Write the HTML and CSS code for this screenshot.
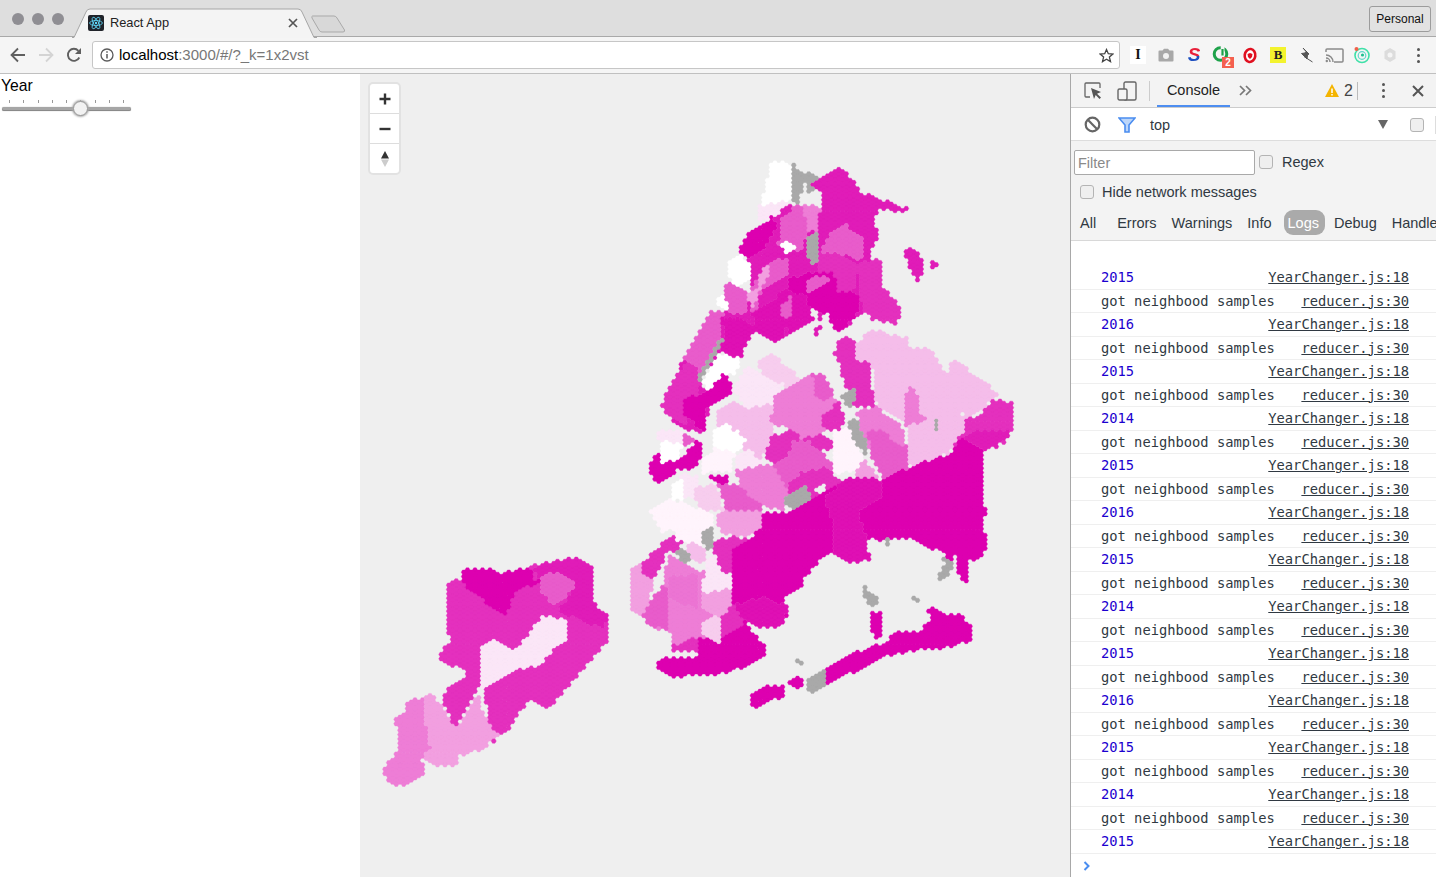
FILE: index.html

```html
<!DOCTYPE html>
<html lang="en">
<head>
    <meta charset="UTF-8">
    <title>React App</title>
    <link rel="stylesheet" href="styles.css">
</head>
<body>
    <div class="tabstrip">
        <div class="lights"><span class="light"></span><span class="light"></span><span class="light"></span></div>
        <div class="tab">
            <svg class="tab-shape" width="245" height="30" viewBox="0 0 245 30"><path d="M0 29.5 H2 L14 4 Q15 1 18 1 H226 Q229 1 230 4 L242 29.5 H245" fill="#f4f4f4" stroke="#a6a6a6"/></svg>
            <svg class="favicon" width="16" height="16" viewBox="0 0 16 16"><rect width="16" height="16" rx="2" fill="#20232a"/><g fill="none" stroke="#61dafb" stroke-width=".8"><ellipse cx="8" cy="8" rx="6.4" ry="2.5"/><ellipse cx="8" cy="8" rx="6.4" ry="2.5" transform="rotate(60 8 8)"/><ellipse cx="8" cy="8" rx="6.4" ry="2.5" transform="rotate(120 8 8)"/></g><circle cx="8" cy="8" r="1.2" fill="#61dafb"/></svg>
            <span class="tab-title">React App</span>
            <svg class="tab-close" width="10" height="10" viewBox="0 0 10 10"><path d="M1 1 L9 9 M9 1 L1 9" stroke="#555" stroke-width="1.7"/></svg>
        </div>
        <svg class="new-tab" width="35" height="18" viewBox="0 0 35 18"><path d="M1.5 1 H23 Q25 1 26 3 L33.500 15 Q34 17 32 17 H11 Q9 17 8 15 L1 3 Q.5 1 1.500 1Z" fill="#d8d8d8" stroke="#a9a9a9"/></svg>
        <div class="profile">Personal</div>
    </div>

    <div class="toolbar">
        <div class="nav-btn"><svg width="16" height="16" viewBox="0 0 16 16"><path d="M15 8 H2 M8 1.500 L1.500 8 L8 14.500" fill="none" stroke="#5f5f5f" stroke-width="1.800"/></svg></div>
        <div class="nav-btn"><svg width="16" height="16" viewBox="0 0 16 16"><path d="M1 8 H14 M8 1.500 L14.500 8 L8 14.500" fill="none" stroke="#d4d4d4" stroke-width="1.800"/></svg></div>
        <div class="nav-btn"><svg width="16" height="16" viewBox="0 0 16 16"><path d="M13.300 10.500 A6 6 0 1 1 12.400 3.800" fill="none" stroke="#5f5f5f" stroke-width="1.900"/><path d="M15 1 V7 H9Z" fill="#5f5f5f"/></svg></div>
        <div class="urlbar">
            <svg class="info-icon" width="14" height="14" viewBox="0 0 14 14"><circle cx="7" cy="7" r="6" fill="none" stroke="#5a5a5a" stroke-width="1.300"/><path d="M7 6 V10.500 M7 3.300 V4.800" stroke="#5a5a5a" stroke-width="1.500"/></svg>
            <span class="url"><span class="url-host">localhost</span>:3000/#/?_k=1x2vst</span>
            <svg class="star-icon" width="15" height="15" viewBox="0 0 15 15"><path d="M7.500 1.500 L9.300 5.700 L13.900 6.100 L10.400 9.100 L11.500 13.600 L7.500 11.200 L3.500 13.600 L4.600 9.100 L1.100 6.100 L5.700 5.700Z" fill="none" stroke="#444" stroke-width="1.300"/></svg>
        </div>
        <div class="extensions">
            <div class="ext"><span class="ext-i">I</span></div>
            <div class="ext"><svg width="16" height="14" viewBox="0 0 16 14"><path d="M1.500 2.500 H4.500 L6 .8 H10 L11.500 2.500 H14.500 Q15.500 2.500 15.500 3.500 V12.500 Q15.500 13.500 14.500 13.500 H1.500 Q.5 13.500 .5 12.500 V3.500 Q.5 2.500 1.500 2.500Z" fill="#a8a8a8"/><circle cx="8" cy="8" r="3" fill="#f2f2f2"/></svg></div>
            <div class="ext"><span class="ext-s">S</span></div>
            <div class="ext"><svg width="20" height="20" viewBox="0 0 20 20"><circle cx="8.500" cy="9" r="6.300" fill="none" stroke="#1ea24a" stroke-width="3"/><path d="M8.700 1 H12.500 V10 H8.700Z" fill="#f5f5f5"/><path d="M10.500 4 V10.500" stroke="#1ea24a" stroke-width="2.200"/></svg><span class="ext-badge">2</span></div>
            <div class="ext"><svg width="16" height="17" viewBox="0 0 16 17"><ellipse cx="8" cy="8.500" rx="5.300" ry="6.500" fill="#fff" stroke="#e01020" stroke-width="2.600" transform="rotate(8 8 8.500)"/><path d="M5.500 7 L8 6 L10.500 7 L10 10 L8 12 L6 10Z" fill="#e01020"/></svg></div>
            <div class="ext"><span class="ext-b">B</span></div>
            <div class="ext"><svg width="16" height="16" viewBox="0 0 16 16"><path d="M5 1 L11 7 L9.500 8 L9 12 L3.500 6.500 L7 6 L8 4.500Z M6 9.500 L14.500 15" fill="#555" stroke="#555"/></svg></div>
            <div class="ext"><svg width="19" height="15" viewBox="0 0 19 15"><path d="M1 4 V2 Q1 1 2 1 H17 Q18 1 18 2 V13 Q18 14 17 14 H9" fill="none" stroke="#8a8a8a" stroke-width="1.500"/><path d="M1 7 A7 7 0 0 1 8 14 M1 10 A4 4 0 0 1 5 14" fill="none" stroke="#8a8a8a" stroke-width="1.500"/><circle cx="1.800" cy="13" r="1.200" fill="#8a8a8a"/></svg></div>
            <div class="ext"><svg width="18" height="18" viewBox="0 0 18 18"><circle cx="9" cy="9.500" r="7" fill="none" stroke="#3fe0a8" stroke-width="1.600"/><circle cx="9" cy="9.500" r="3.800" fill="none" stroke="#5fd8c8" stroke-width="1.200"/><circle cx="9.500" cy="9" r="1.600" fill="#20c090"/><circle cx="3.500" cy="3" r="2" fill="#f0604a"/></svg></div>
            <div class="ext"><svg width="16" height="16" viewBox="0 0 16 16"><path d="M8 1 L13.500 4.300 V11.700 L8 15 L2.500 11.700 V4.300Z" fill="#dcdcdc"/><circle cx="8" cy="8" r="2.500" fill="#f5f5f5"/></svg></div>
            <div class="ext"><span class="dots"><i></i><i></i><i></i></span></div>
        </div>
    </div>

    <div class="main">
        <div class="sidebar">
            <div class="year-label">Year</div>
            <div class="slider">
                <div class="ticks"><i></i><i></i><i></i><i></i><i></i><i></i><i></i><i></i><i></i></div>
                <div class="rail"></div>
                <div class="thumb"></div>
            </div>
        </div>

        <div class="map">
            <svg id="hexmap" width="710" height="803" viewBox="360 74 710 803"></svg>
            <div class="map-controls">
                <div class="map-btn"><svg width="12" height="12" viewBox="0 0 12 12"><path d="M6 .5 V11.500 M.5 6 H11.500" stroke="#333" stroke-width="2.400"/></svg></div>
                <div class="map-btn"><svg width="12" height="12" viewBox="0 0 12 12"><path d="M.5 6 H11.500" stroke="#333" stroke-width="2.400"/></svg></div>
                <div class="map-btn"><svg width="10" height="18" viewBox="0 0 10 18"><path d="M5 1 L9 8.500 H1Z" fill="#333"/><path d="M5 17 L9 9.500 H1Z" fill="#ccc"/></svg></div>
            </div>
        </div>

        <div class="devtools">
            <div class="dt-tabs">
                <svg class="dt-inspect" width="18" height="18" viewBox="0 0 18 18"><path d="M6 15 H2 Q1 15 1 14 V2 Q1 1 2 1 H15 Q16 1 16 2 V6" fill="none" stroke="#666" stroke-width="1.300"/><path d="M7 6 L17 10 L13 11.700 L17 15.500 L15.500 17 L11.700 13 L10 17Z" fill="#555"/></svg>
                <svg class="dt-device" width="20" height="20" viewBox="0 0 20 20"><rect x="7" y="1" width="12" height="18" rx="1.500" fill="none" stroke="#666" stroke-width="1.400"/><rect x="1" y="8" width="9" height="11" rx="1.500" fill="#f3f3f3" stroke="#666" stroke-width="1.400"/></svg>
                <span class="dt-sep"></span>
                <span class="dt-tab">Console</span>
                <svg class="dt-more" width="13" height="11" viewBox="0 0 13 11"><path d="M1 1 L5.500 5.500 L1 10 M7 1 L11.500 5.500 L7 10" fill="none" stroke="#777" stroke-width="1.700"/></svg>
                <span class="dt-warn"><svg width="14" height="13" viewBox="0 0 14 13"><path d="M7 0 L14 13 H0Z" fill="#f4b400"/><path d="M7 4.500 V9 M7 10 V11.500" stroke="#fff" stroke-width="1.500"/></svg>2</span>
                <span class="dt-sep-small"></span>
                <span class="dots dt-dots"><i></i><i></i><i></i></span>
                <svg class="dt-close" width="12" height="12" viewBox="0 0 12 12"><path d="M1 1 L11 11 M11 1 L1 11" stroke="#555" stroke-width="2"/></svg>
            </div>

            <div class="dt-context">
                <svg class="dt-clear" width="17" height="17" viewBox="0 0 17 17"><circle cx="8.500" cy="8.500" r="6.800" fill="none" stroke="#666" stroke-width="2.200"/><path d="M3.800 3.800 L13.200 13.200" stroke="#666" stroke-width="2.200"/></svg>
                <svg class="dt-funnel" width="18" height="16" viewBox="0 0 18 16"><path d="M1 1 H17 L11 8 V15 H7 V8Z" fill="#bcd6fa" stroke="#4a8df0" stroke-width="1.600"/></svg>
                <span class="dt-top">top</span>
                <svg class="dt-arrow" width="10" height="9" viewBox="0 0 10 9"><path d="M0 0 H10 L5 9Z" fill="#666"/></svg>
                <span class="check"></span>
                <span class="dt-sep-thin"></span>
            </div>

            <div class="dt-filters">
                <div class="filter-row">
                    <div class="filter-input">Filter</div>
                    <span class="check"></span>
                    <span class="filter-label">Regex</span>
                </div>
                <div class="hide-row">
                    <span class="check"></span>
                    <span>Hide network messages</span>
                </div>
                <div class="levels">
                    <span class="level-all">All</span>
                    <span>Errors</span>
                    <span>Warnings</span>
                    <span>Info</span>
                    <span class="level-on">Logs</span>
                    <span>Debug</span>
                    <span>Handled</span>
                </div>
            </div>

            <div class="messages">
                <div class="msg"><span class="num">2015</span><a class="src">YearChanger.js:18</a></div>
                <div class="msg"><span>got neighbood samples</span><a class="src">reducer.js:30</a></div>
                <div class="msg"><span class="num">2016</span><a class="src">YearChanger.js:18</a></div>
                <div class="msg"><span>got neighbood samples</span><a class="src">reducer.js:30</a></div>
                <div class="msg"><span class="num">2015</span><a class="src">YearChanger.js:18</a></div>
                <div class="msg"><span>got neighbood samples</span><a class="src">reducer.js:30</a></div>
                <div class="msg"><span class="num">2014</span><a class="src">YearChanger.js:18</a></div>
                <div class="msg"><span>got neighbood samples</span><a class="src">reducer.js:30</a></div>
                <div class="msg"><span class="num">2015</span><a class="src">YearChanger.js:18</a></div>
                <div class="msg"><span>got neighbood samples</span><a class="src">reducer.js:30</a></div>
                <div class="msg"><span class="num">2016</span><a class="src">YearChanger.js:18</a></div>
                <div class="msg"><span>got neighbood samples</span><a class="src">reducer.js:30</a></div>
                <div class="msg"><span class="num">2015</span><a class="src">YearChanger.js:18</a></div>
                <div class="msg"><span>got neighbood samples</span><a class="src">reducer.js:30</a></div>
                <div class="msg"><span class="num">2014</span><a class="src">YearChanger.js:18</a></div>
                <div class="msg"><span>got neighbood samples</span><a class="src">reducer.js:30</a></div>
                <div class="msg"><span class="num">2015</span><a class="src">YearChanger.js:18</a></div>
                <div class="msg"><span>got neighbood samples</span><a class="src">reducer.js:30</a></div>
                <div class="msg"><span class="num">2016</span><a class="src">YearChanger.js:18</a></div>
                <div class="msg"><span>got neighbood samples</span><a class="src">reducer.js:30</a></div>
                <div class="msg"><span class="num">2015</span><a class="src">YearChanger.js:18</a></div>
                <div class="msg"><span>got neighbood samples</span><a class="src">reducer.js:30</a></div>
                <div class="msg"><span class="num">2014</span><a class="src">YearChanger.js:18</a></div>
                <div class="msg"><span>got neighbood samples</span><a class="src">reducer.js:30</a></div>
                <div class="msg"><span class="num">2015</span><a class="src">YearChanger.js:18</a></div>
                <svg class="prompt" width="8" height="10" viewBox="0 0 8 10"><path d="M1.500 1 L5.500 5 L1.500 9" fill="none" stroke="#4a8df0" stroke-width="2"/></svg>
            </div>
        </div>
    </div>

    <script src="map.js"></script>
</body>
</html>
```

FILE: styles.css

```css
html, body {
    margin: 0;
    height: 877px;
    overflow: hidden;
    background-color: #fff;
    font-family: "Liberation Sans", Arial, sans-serif;
}
.tabstrip {
    position: relative;
    display: flex;
    height: 37px;
    background-color: #dedede;
    border-bottom: 1px solid #a9a9a9;
    box-sizing: border-box;
}
.lights {
    display: flex;
    gap: 8px;
    padding: 13px 0 0 12px;
    width: 60px;
}
.light {
    width: 12px;
    height: 12px;
    border-radius: 50%;
    background-color: #8f8e93;
}
.tab {
    position: relative;
    display: flex;
    align-items: center;
    width: 245px;
    height: 29px;
    margin-top: 8px;
    font-size: 12.800px;
}
.tab-shape {
    position: absolute;
    left: 0;
    top: 0;
}
.favicon {
    position: relative;
    margin-left: 16px;
}
.tab-title {
    position: relative;
    margin-left: 6px;
    color: #222;
}
.tab-close {
    position: absolute;
    left: 216px;
    top: 10px;
}
.new-tab {
    margin: 15px 0 0 -6px;
}
.profile {
    position: absolute;
    right: 5px;
    top: 6px;
    width: 60px;
    height: 24px;
    line-height: 24px;
    text-align: center;
    font-size: 12px;
    color: #111;
    border: 1px solid #9c9c9c;
    border-radius: 3px;
    background-color: #e2e2e2;
}
.toolbar {
    display: flex;
    align-items: center;
    height: 37px;
    padding: 0 4px;
    box-sizing: border-box;
    background-color: #f5f5f5;
    border-bottom: 1px solid #c0c0c0;
}
.nav-btn, .ext {
    position: relative;
    display: flex;
    align-items: center;
    justify-content: center;
    width: 28px;
    height: 28px;
}
.urlbar {
    display: flex;
    align-items: center;
    flex: 1;
    height: 28px;
    margin: 0 4px 0 4px;
    box-sizing: border-box;
    background-color: #fff;
    border: 1px solid #c6c6c6;
    border-radius: 3px;
}
.info-icon {
    margin-left: 7px;
}
.url {
    margin: 0 0 2px 5px;
    flex: 1;
    font-size: 15px;
    color: #777;
}
.url-host {
    color: #000;
}
.star-icon {
    margin-right: 5px;
}
.extensions {
    display: flex;
}
.ext-i {
    width: 16px;
    text-align: center;
    font: bold 14px/18px "Liberation Serif", serif;
    color: #111;
    background-color: #fff;
}
.ext-s {
    font: italic bold 19px/20px "Liberation Sans", sans-serif;
    color: transparent;
    background: linear-gradient(#e8203a 55%, #1f50c0 55%);
    -webkit-background-clip: text;
    background-clip: text;
}
.ext-b {
    width: 16px;
    height: 16px;
    text-align: center;
    font: bold 13px/16px "Liberation Serif", serif;
    background-color: #f3f32e;
    color: #222;
}
.ext-badge {
    position: absolute;
    right: 2px;
    bottom: 1px;
    width: 12px;
    height: 11px;
    line-height: 11px;
    text-align: center;
    font-size: 10px;
    font-weight: bold;
    color: #fff;
    background-color: #f4604f;
}
.dots {
    display: flex;
    flex-direction: column;
    gap: 3px;
}
.dots i {
    width: 3px;
    height: 3px;
    border-radius: 50%;
    background-color: #555;
}

.main {
    display: flex;
    height: 803px;
}
.sidebar {
    width: 360px;
    background-color: #fff;
}
.year-label {
    margin: 2px 0 0 1px;
    font-size: 15.700px;
    line-height: 19px;
    color: #000;
}
.slider {
    position: relative;
    width: 129px;
    margin: 5px 0 0 2px;
}
.ticks {
    display: flex;
    justify-content: space-between;
    height: 4px;
    padding: 0 7px;
}
.ticks i {
    width: 1px;
    height: 3px;
    background-color: #999;
}
.rail {
    height: 4px;
    margin-top: 3px;
    border-radius: 2px;
    background-color: #a6a6a6;
    box-shadow: inset 0 -1px 0 #8a8a8a, 0 0 1px #999;
}
.thumb {
    position: absolute;
    left: 71px;
    top: 1px;
    width: 13px;
    height: 13px;
    border-radius: 50%;
    background-color: #f2f2f2;
    border: 1px solid #999;
    box-shadow: 0 0 2px 1px #aaa;
}
.map {
    position: relative;
    width: 710px;
    background-color: #efefef;
}
#hexmap {
    display: block;
}
.map-controls {
    position: absolute;
    left: 8px;
    top: 8px;
    width: 29px;
    background-color: #fff;
    border: 2px solid #e2e2e2;
    border-radius: 5px;
}
.map-btn {
    display: flex;
    align-items: center;
    justify-content: center;
    height: 29px;
    border-bottom: 1px solid #ddd;
}
.map-btn:last-child {
    border-bottom: none;
}

.devtools {
    width: 366px;
    box-sizing: border-box;
    border-left: 1px solid #a8a8a8;
    font-size: 14.500px;
    color: #303942;
    overflow: hidden;
}
.dt-tabs {
    position: relative;
    display: flex;
    align-items: center;
    height: 34px;
    box-sizing: border-box;
    background-color: #f3f3f3;
    border-bottom: 1px solid #ccc;
}
.dt-inspect {
    margin-left: 13px;
}
.dt-device {
    margin-left: 15px;
}
.dt-sep {
    width: 1px;
    height: 20px;
    margin-left: 12px;
    background-color: #ccc;
}
.dt-tab {
    align-self: stretch;
    line-height: 33px;
    margin-left: 7px;
    width: 73px;
    box-sizing: border-box;
    text-align: center;
    font-size: 14.500px;
    color: #222;
    border-bottom: 2px solid #4d8df0;
}
.dt-more {
    margin-left: 9px;
}
.dt-warn {
    display: flex;
    align-items: center;
    gap: 5px;
    margin-left: 73px;
    font-size: 16px;
    color: #444;
}
.dt-sep-small {
    width: 1px;
    height: 18px;
    margin-left: 4px;
    background-color: #bbb;
}
.dt-dots {
    margin-left: 24px;
}
.dt-close {
    margin-left: 27px;
}
.dt-context {
    display: flex;
    align-items: center;
    height: 33px;
    padding-top: 1px;
    background-color: #fff;
    border-bottom: 1px solid #ddd;
    box-sizing: border-box;
}
.dt-clear {
    margin-left: 13px;
}
.dt-funnel {
    margin-left: 17px;
}
.dt-top {
    margin-left: 14px;
    flex: 1;
}
.dt-arrow {
    margin-right: 22px;
}
.dt-context .check {
    margin-right: 11px;
}
.dt-sep-thin {
    width: 1px;
    height: 18px;
    background-color: #ddd;
}
.check {
    display: block;
    width: 12px;
    height: 12px;
    background-color: #efefef;
    border: 1px solid #b4b4b4;
    border-radius: 3px;
}
.dt-filters {
    height: 100px;
    box-sizing: border-box;
    padding-top: 8px;
    background-color: #f3f3f3;
    border-bottom: 1px solid #d8d8d8;
}
.filter-row {
    display: flex;
    align-items: center;
    height: 26px;
    padding-left: 3px;
}
.filter-input {
    height: 23px;
    line-height: 24px;
    margin-right: 4px;
    padding-left: 3px;
    width: 176px;
    background-color: #fff;
    border: 1px solid #a9a9a9;
    border-radius: 2px;
    color: #8a8a8a;
}
.filter-label {
    margin-left: 9px;
}
.hide-row {
    display: flex;
    align-items: center;
    gap: 8px;
    height: 24px;
    margin-top: 5px;
    padding-left: 9px;
}
.levels {
    display: flex;
    align-items: center;
    gap: 15px;
    height: 25px;
    margin-top: 6px;
    white-space: nowrap;
}
.level-all {
    margin-left: 9px;
    margin-right: 6px;
}
.level-on {
    height: 25px;
    line-height: 26px;
    margin: 0 -6px 0 -3px;
    padding: 0 6px 0 4px;
    border-radius: 9px;
    background-color: #aaa;
    color: #fff;
}
.messages {
    padding-top: 25px;
    font-family: "DejaVu Sans Mono", monospace;
    font-size: 13.750px;
}
.msg {
    display: flex;
    justify-content: space-between;
    align-items: center;
    height: 23.500px;
    box-sizing: border-box;
    padding: 0 27px 0 30px;
    border-bottom: 1px solid #efefef;
    color: #303942;
}
.num {
    color: #1c00cf;
}
.src {
    text-decoration: underline;
    color: #303942;
}
.prompt {
    display: block;
    margin: 7px 0 0 12px;
}
```

FILE: map.js

```js
// draws the neighbourhood hex map: each hex takes the colour of the last region holding its centre
var HEX_R = 2.5, COL_W = 3.75, HEX_H = 4.33;

var D = "#dd00b0", D2 = "#df10b4", M1 = "#e01cb8", M2 = "#e430be", M3 = "#e85ccb", M3B = "#ec74d3",
    M4 = "#ee7dd6", L1 = "#f29fe0", L2 = "#f5bdea", L3 = "#f7cdee", VL = "#fbe6f7", W = "#fff4fc",
    WH = "#ffffff", G = "#a9a9a9", BG = null;

// points are read off crops at 3x, so each group has its own origin
var SI = [370, 550], NORTH = [640, 150], SOUTH = [620, 430], BAY = [630, 530];

var regions = [
    // staten island
    [M2, SI, "275,60 360,55 400,70 520,40 625,20 665,50 665,150 718,205 710,280 600,400 570,440 525,480 480,450 430,510 425,535 370,575 340,420 330,410 285,480 255,535 215,440 245,400 285,385 280,355 225,345 205,315 245,270 230,245 235,100 275,85"],
    [D, SI, "275,60 360,55 400,70 440,60 490,60 490,90 505,90 510,100 440,120 410,190 390,195 340,150 275,100"],
    [M1, SI, "490,60 520,40 625,20 665,50 665,150 718,205 700,235 640,220 565,180 615,115 570,70 510,85"],
    [M3, SI, "510,85 555,65 610,95 610,120 550,165 515,130"],
    [VL, SI, "330,295 368,268 425,305 470,265 515,200 590,205 590,265 540,310 510,345 470,350 400,380 340,420 330,410"],
    [L1, SI, "165,445 190,430 240,510 255,535 290,490 320,430 330,440 340,490 385,555 340,595 280,615 260,605 260,650 200,650 160,625 180,590 170,560"],
    [M4, SI, "105,460 130,445 165,445 170,560 185,590 155,625 165,675 110,705 60,705 37,655 80,610 80,530 72,505 105,490"],

    // bronx and upper manhattan
    [WH, NORTH, "390,36 455,40 455,150 360,170 380,100"],
    [VL, NORTH, "355,170 440,150 445,175 415,205 360,215"],
    [G, NORTH, "455,40 500,75 475,160 450,155"],
    [G, NORTH, "505,70 545,85 510,135 500,120"],
    [M1, NORTH, "300,300 320,260 395,200 415,200 430,170 490,165 545,170 545,130 515,105 600,55 650,95 655,125 730,150 800,175 795,190 720,175 700,205 720,265 690,295 695,330 725,325 730,410 780,470 780,510 765,520 700,510 675,480 610,540 585,540 565,495 520,470 510,490 525,515 470,540 400,575 345,540 340,430 330,340"],
    [M3, NORTH, "420,210 470,165 500,175 500,260 480,300 415,290"],
    [M4, NORTH, "490,165 545,170 530,240 500,250"],
    [D, NORTH, "310,265 395,200 415,230 380,285 330,330 295,305"],
    [M3, NORTH, "580,240 610,220 670,270 670,330 600,310 535,310"],
    [M2, NORTH, "650,340 730,325 730,410 780,470 780,510 765,520 700,510 670,480 660,440"],
    [M2, NORTH, "530,310 600,310 650,340 645,420 590,440 520,400 530,360"],
    [D, NORTH, "440,390 500,370 570,365 595,390 590,425 660,430 660,480 610,540 585,540 565,495 520,470 450,430"],
    [M3, NORTH, "490,410 530,375 570,385 560,405 510,425"],
    [M3, NORTH, "370,370 415,320 440,330 440,370 360,430 350,490 320,480 325,425"],
    [L1, NORTH, "365,350 385,350 385,385 350,430 350,460 325,480 325,430 350,410"],
    [D2, NORTH, "330,490 440,420 500,440 510,490 525,515 470,540 400,575 345,540"],
    [M3, NORTH, "420,480 450,430 460,500 430,505"],
    [WH, NORTH, "420,290 440,275 465,290 440,310"],
    [G, NORTH, "500,260 530,240 530,330 520,350 500,320"],
    [M1, NORTH, "795,295 815,285 845,320 845,380 830,395 800,340"],
    [M1, NORTH, "515,540 550,515 530,555"],
    [M1, NORTH, "530,492 546,492 546,510 530,510"],
    [M1, NORTH, "432,538 450,538 450,556 432,556"],
    [M1, NORTH, "872,336 890,336 890,354 872,354"],

    // manhattan strip
    [M1, NORTH, "260,395 320,420 345,540 300,625 240,605 175,700 205,720 245,670 280,700 270,740 210,770 190,850 130,835 70,790 65,760 110,670 130,620 215,480 255,490"],
    [M3, NORTH, "215,480 250,490 240,570 180,680 130,630"],
    [M2, NORTH, "110,670 150,635 185,670 175,740 135,830 70,790 65,760"],
    [D, NORTH, "130,750 210,720 245,670 280,700 270,740 200,780 190,850 130,790"],
    [D2, NORTH, "240,500 320,510 345,540 300,625 240,600 255,560"],
    [M3, NORTH, "255,395 325,430 325,490 270,490 250,430"],
    [WH, NORTH, "270,330 295,310 335,340 330,390 295,410 270,385"],
    [WH, NORTH, "225,450 250,440 270,465 255,490"],
    [WH, NORTH, "180,700 240,610 300,625 290,670 245,670 210,720"],
    [G, NORTH, "240,570 260,560 225,620 180,695 175,680"],

    // queens north side
    [M2, NORTH, "580,610 605,560 640,570 650,630 695,640 690,690 710,770 640,770 610,700 600,635"],
    [L2, NORTH, "640,580 705,540 800,565 805,595 850,595 880,610 925,680 925,700 970,800 910,840 830,850 760,790 710,770 695,640 650,630"],
    [L2, NORTH, "925,650 945,630 1075,730 1050,750 1025,785 980,810 950,760 920,690"],
    [M4, NORTH, "790,780 805,700 830,720 840,790 880,810 790,830"],
    [M2, NORTH, "980,810 1030,785 1055,750 1115,755 1125,820 1090,880 1020,900 930,900 930,880"],
    [L3, NORTH, "350,640 390,610 470,670 480,700 430,710 400,720"],
    [VL, NORTH, "280,720 320,640 370,680 430,700 410,760 340,770 320,780"],
    [L2, NORTH, "230,780 280,750 320,780 400,760 400,900 240,900"],
    [WH, NORTH, "225,840 260,815 310,870 300,900 225,900"],
    [M4, NORTH, "400,730 515,675 525,720 600,760 610,800 575,830 540,850 480,870 440,830 390,820"],
    [M3, NORTH, "515,675 550,675 580,720 585,745 530,750"],
    [M2, NORTH, "550,800 600,750 615,825 580,850 550,830"],
    [M2, NORTH, "400,860 450,840 490,870 540,850 575,870 575,900 400,900"],
    [W, NORTH, "580,840 620,835 650,900 580,900"],
    [M4, NORTH, "650,780 710,770 760,810 790,835 790,880 780,900 670,900"],
    [L2, NORTH, "800,830 870,810 880,900 800,900"],
    [L2, NORTH, "880,800 970,800 975,840 930,880 880,880"],
    [G, NORTH, "600,740 640,715 650,750 620,775"],
    [G, NORTH, "620,815 650,805 680,900 650,900"],
    [G, NORTH, "880,810 895,810 910,880 885,870"],

    // bay ridge side of brooklyn
    [L1, BAY, "0,110 30,105 70,150 60,200 40,265 20,250 0,230"],
    [M4, BAY, "60,290 50,230 100,160 115,70 160,105 235,130 215,180 215,240 275,260 275,345 210,320 130,345 125,310"],
    [M3, BAY, "50,230 100,160 130,180 110,230 120,260 115,300 60,290 35,260"],
    [M3B, BAY, "110,140 205,130 210,240 120,210"],
    [M2, BAY, "35,100 130,10 165,40 130,65 110,70 70,150 40,130"],
    [L2, BAY, "170,40 210,35 230,60 230,100 195,100 170,65"],
    [VL, BAY, "230,90 265,55 275,130 320,145 315,175 225,195 210,170 230,130"],
    [G, BAY, "135,65 170,55 185,85 165,105"],
    [G, BAY, "215,15 250,0 250,35 235,65"],
    [L1, BAY, "210,190 310,175 310,225 270,260 215,240"],
    [L3, BAY, "220,275 270,255 275,345 220,320"],
    [M2, BAY, "275,265 310,225 350,280 275,320"],
    [M2, BAY, "130,345 210,320 275,345 275,365 130,365"],

    // brooklyn and middle queens
    [M2, SOUTH, "275,335 335,320 400,330 340,355 335,430 300,425"],
    [W, SOUTH, "90,240 150,205 235,235 285,260 285,295 240,345 170,330 165,300 125,305"],
    [L1, SOUTH, "285,255 315,240 420,235 430,290 385,320 300,310"],
    [G, SOUTH, "250,310 285,290 275,360 245,330"],
    [L3, SOUTH, "220,170 290,165 310,240 260,240 230,225"],
    [VL, SOUTH, "180,130 235,140 225,200 150,205"],
    [WH, SOUTH, "155,170 190,140 195,210 155,205"],
    [M3, SOUTH, "295,165 350,165 440,225 420,240 320,245"],
    [D, SOUTH, "265,135 340,140 305,165"],
    [D, SOUTH, "90,95 110,70 175,90 235,30 250,65 220,120 170,120 120,165 90,135"],
    [M3, SOUTH, "190,10 230,25 180,60"],
    [VL, SOUTH, "115,0 190,0 190,40 115,35"],
    [WH, SOUTH, "120,35 190,40 175,85 120,105"],
    [W, SOUTH, "250,90 290,50 345,70 330,125 280,125 250,130"],
    [VL, SOUTH, "340,80 390,60 430,100 400,115 360,130"],
    [WH, SOUTH, "285,0 350,0 385,35 340,70 290,50"],
    [L2, SOUTH, "365,0 460,0 465,40 420,85 385,60"],
    [M4, SOUTH, "350,120 440,100 500,120 535,130 495,200 495,245 430,225 355,170"],
    [M3, SOUTH, "445,75 470,45 560,30 640,100 640,130 570,150 500,170"],
    [M2, SOUTH, "430,80 455,20 520,0 520,60 470,100"],
    [M2, SOUTH, "500,170 545,125 610,110 640,130 665,155 600,195 505,230"],
    [W, SOUTH, "640,0 690,0 730,85 700,125 640,130"],
    [G, SOUTH, "690,0 730,0 745,85"],
    [L1, SOUTH, "700,125 730,90 780,140 720,150"],
    [M3, SOUTH, "740,0 790,0 830,45 860,50 870,110 790,150 760,100"],
    [L2, SOUTH, "860,0 950,0 1010,20 990,70 860,110"],
    [M1, SOUTH, "1020,20 1085,0 1180,0 1130,50 1085,60"],
    [G, SOUTH, "490,210 550,165 580,195 540,230 505,235"],
    [BG, SOUTH, "585,175 640,155 595,200"],

    // south brooklyn and queens, mostly the deepest colour
    [D, SOUTH, "430,250 500,250 600,195 660,160 690,140 780,150 870,110 990,70 1020,20 1085,60 1090,230 1100,240 1090,280 1100,345 1090,375 1045,395 1015,375 1000,375 995,400 970,365 940,360 880,325 830,325 790,335 740,325 750,390 680,400 640,365 590,400 550,445 555,465 490,505 505,535 495,585 440,595 380,580 340,525 340,350 395,320 430,290"],
    [D, SOUTH, "305,625 345,600 375,575 445,665 390,705 320,730 160,740 110,715 110,695 140,680 165,685 230,680 240,620 300,640"],
    [D2, SOUTH, "640,290 710,240 740,320 750,390 680,400 640,365"],
    [D2, SOUTH, "610,200 690,140 790,150 790,200 710,240 640,280"],
    [D2, SOUTH, "340,525 440,500 500,530 495,585 440,595 380,580"],
    [D, SOUTH, "1015,425 1045,430 1045,455 1030,460"],
    [D, SOUTH, "1015,375 1045,395 1040,430 1015,425"],
    [G, SOUTH, "945,360 970,380 1000,390 990,430 965,460 950,445 975,400"],
    [G, SOUTH, "790,330 825,320 800,345"],
    [G, SOUTH, "735,460 745,480 780,510 760,535 735,510"],
    [G, SOUTH, "875,505 890,495 895,515 885,520"],
    [G, SOUTH, "555,750 610,720 630,755 570,790"],
    [G, SOUTH, "520,690 540,680 550,710"],
    [D, SOUTH, "755,545 790,545 785,610 765,630 750,590"],
    [D, SOUTH, "920,540 945,535 985,555 1020,550 1055,590 1055,635 960,655 890,660 800,680 650,750 620,760 610,715 670,680 760,650 810,630 820,605 890,605 935,575"],
    [D, SOUTH, "505,755 545,740 550,770 520,775"],
    [D, SOUTH, "390,795 440,770 495,770 495,795 405,835 390,825"]
];

function parsePoly(origin, text) {
    return text.split(" ").map(function (pair) {
        var p = pair.split(",");
        return [origin[0] + p[0] / 3, origin[1] + p[1] / 3];
    });
}

function inside(x, y, poly) {
    var hit = false;
    for (var i = 0, j = poly.length - 1; i < poly.length; j = i++) {
        var a = poly[i], b = poly[j];
        if ((a[1] > y) !== (b[1] > y) && x < (b[0] - a[0]) * (y - a[1]) / (b[1] - a[1]) + a[0]) {
            hit = !hit;
        }
    }
    return hit;
}

// flat-topped cell
function hexPath(x, y) {
    var r = HEX_R, h = HEX_H / 2;
    return "M" + (x - r) + " " + y + "L" + (x - r / 2) + " " + (y - h) + "H" + (x + r / 2) +
        "L" + (x + r) + " " + y + "L" + (x + r / 2) + " " + (y + h) + "H" + (x - r / 2) + "Z";
}

var polys = regions.map(function (r) {
    return { fill: r[0], poly: parsePoly(r[1], r[2]) };
});

var paths = {};
for (var col = 0; col * COL_W < 660; col++) {
    var cx = 370 + col * COL_W;
    for (var cy = 150 + (col % 2 ? HEX_H / 2 : 0); cy < 800; cy += HEX_H) {
        var fill = null;
        for (var k = polys.length - 1; k >= 0; k--) {
            if (inside(cx, cy, polys[k].poly)) {
                fill = polys[k].fill;
                break;
            }
        }
        if (fill) {
            paths[fill] = (paths[fill] || "") + hexPath(+cx.toFixed(2), +cy.toFixed(2));
        }
    }
}

var svg = document.getElementById("hexmap");
Object.keys(paths).forEach(function (fill) {
    var el = document.createElementNS("http://www.w3.org/2000/svg", "path");
    el.setAttribute("d", paths[fill]);
    el.setAttribute("fill", fill);
    el.setAttribute("stroke", fill);
    el.setAttribute("stroke-width", "0.4");
    svg.appendChild(el);
});
```
